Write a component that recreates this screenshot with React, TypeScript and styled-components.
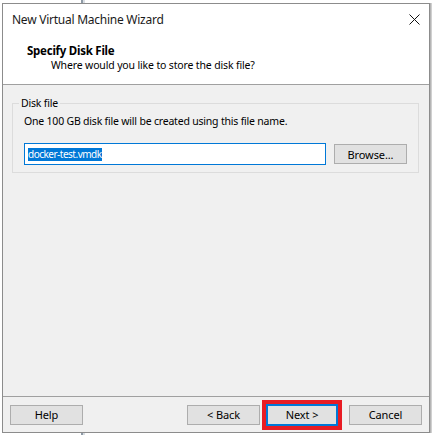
import React from "react";
import styled, { createGlobalStyle } from "styled-components";

const GlobalStyle = createGlobalStyle`
  html, body {
    margin: 0;
    padding: 0;
  }
  body {
    width: 432px;
    height: 435px;
    overflow: hidden;
    background: linear-gradient(
      to right,
      #ffffff 0,
      #ffffff 81px,
      #8e9aa6 81px,
      #8e9aa6 83px,
      #d8dde2 83px,
      #d8dde2 85px,
      #ffffff 85px
    );
    font-family: "Segoe UI", "Noto Sans", sans-serif;
  }
`;

const Window = styled.div`
  box-sizing: border-box;
  margin: 3px 0 0 2px;
  width: 428px;
  height: 430px;
  border: 1px solid #8c8c8c;
  box-shadow: 1px 0 0 #b5b5b5, 2px 0 0 #d0d0d0;
  background: #f0f0f0;
  display: flex;
  flex-direction: column;
  color: #000;
`;

const TitleBar = styled.div`
  height: 30px;
  background: #fff;
  display: flex;
  align-items: center;
  justify-content: space-between;
  padding: 0 9px 0 9px;
`;

const Title = styled.span`
  font-size: 12px;
  letter-spacing: -0.25px;
  color: #1a1a1a;
`;

const CloseIcon = () => (
  <svg width="11" height="11" viewBox="0 0 11 11">
    <path d="M0.5 0.5 L10.5 10.5 M10.5 0.5 L0.5 10.5" stroke="#111" strokeWidth="1" />
  </svg>
);

const Header = styled.div`
  background: #fff;
  height: 51px;
  border-bottom: 1px solid #a0a0a0;
  padding: 9px 0 0 24px;
  box-sizing: border-box;
`;

const HeaderTitle = styled.div`
  font-size: 11.5px;
  letter-spacing: -0.25px;
  font-weight: 700;
  line-height: 15px;
`;

const HeaderSub = styled.div`
  font-size: 10.5px;
  letter-spacing: -0.15px;
  line-height: 15px;
  padding-left: 24px;
`;

const Body = styled.div`
  flex: 1;
  padding: 11px 10px 0 9px;
`;

const Group = styled.fieldset`
  margin: 0;
  border: 1px solid #dcdcdc;
  padding: 3px 11px 12px 11px;
  height: 77px;
  box-sizing: border-box;
`;

const GroupLabel = styled.legend`
  font-size: 10.5px;
  letter-spacing: -0.2px;
  padding: 0 2px;
  margin-left: -5px;
  line-height: 15px;
`;

const Note = styled.div`
  font-size: 10.5px;
  letter-spacing: -0.2px;
  line-height: 15px;
`;

const PathRow = styled.div`
  display: flex;
  align-items: center;
  margin-top: 14px;
`;

const PathBox = styled.div`
  box-sizing: border-box;
  width: 302px;
  height: 22px;
  border: 1px solid #0078d7;
  background: #fff;
  display: flex;
  align-items: center;
  padding-left: 3px;
`;

const Selected = styled.span`
  background: #0078d7;
  color: #fff;
  font-size: 10px;
  letter-spacing: -0.5px;
  line-height: 13px;
`;

const Button = styled.button<{ $default?: boolean }>`
  box-sizing: border-box;
  width: ${(p) => (p.$default ? "72px" : "73px")};
  height: ${(p) => (p.$default ? "22px" : "20px")};
  background: #e1e1e1;
  border: ${(p) => (p.$default ? "2px solid #0078d7" : "1px solid #adadad")};
  font-family: inherit;
  font-size: 11px;
  letter-spacing: -0.1px;
  color: #000;
  padding: 0;
  margin: 0;
`;

const BrowseButton = styled(Button)`
  margin-left: 8px;
`;

const Footer = styled.div`
  height: 35px;
  border-top: 1px solid #a0a0a0;
  display: flex;
  align-items: center;
  padding: 0 7px 0 7px;
`;

const Spacer = styled.div`
  flex: 1;
`;

const Highlight = styled.div`
  border: 4px solid #e81c24;
  margin: 0 7px 0 2px;
  display: flex;
`;

export default function App() {
  return (
    <>
      <GlobalStyle />
      <Window>
        <TitleBar>
          <Title>New Virtual Machine Wizard</Title>
          <CloseIcon />
        </TitleBar>
        <Header>
          <HeaderTitle>Specify Disk File</HeaderTitle>
          <HeaderSub>Where would you like to store the disk file?</HeaderSub>
        </Header>
        <Body>
          <Group>
            <GroupLabel>Disk file</GroupLabel>
            <Note>One 100 GB disk file will be created using this file name.</Note>
            <PathRow>
              <PathBox>
                <Selected>docker-test.vmdk</Selected>
              </PathBox>
              <BrowseButton>Browse...</BrowseButton>
            </PathRow>
          </Group>
        </Body>
        <Footer>
          <Button>Help</Button>
          <Spacer />
          <Button>&lt; Back</Button>
          <Highlight>
            <Button $default>Next &gt;</Button>
          </Highlight>
          <Button>Cancel</Button>
        </Footer>
      </Window>
    </>
  );
}
